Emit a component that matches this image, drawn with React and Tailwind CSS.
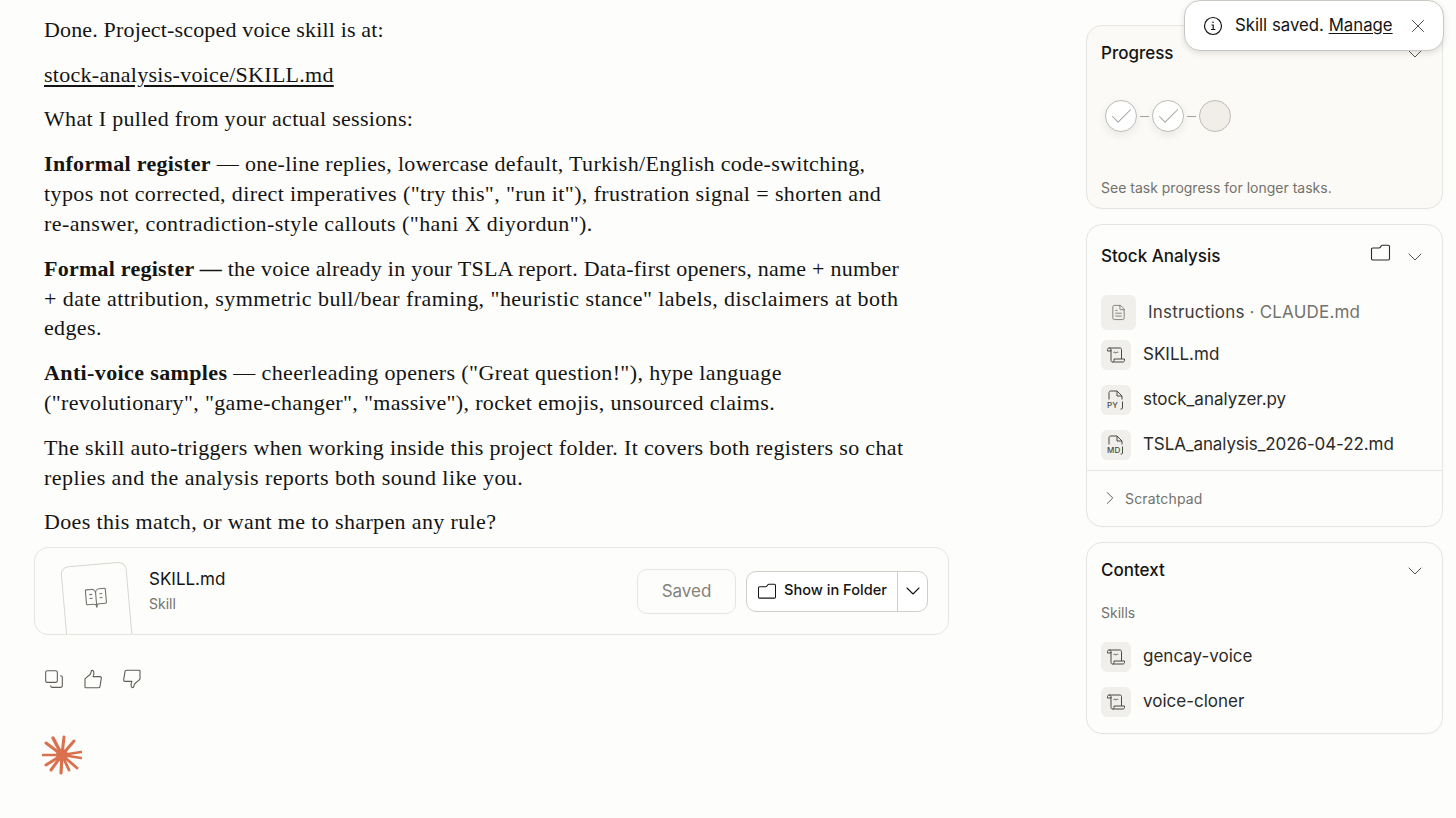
import React from "react";
import { ChevronDown, ChevronRight, X, Check, Copy, FileText, BookOpenText } from "lucide-react";

const SANS = "font-['Inter','Liberation_Sans',sans-serif]";
const SERIF = "font-['Liberation_Serif',serif]";

const FolderIcon = ({ className }) => (
  <svg viewBox="0 0 20 18" fill="none" stroke="currentColor" strokeWidth="1.1" className={className}>
    <path d="M1 5.2c0-.7.5-1.200 1.200-1.200h6.300c.5 0 .9-.2 1.200-.6l1.300-1.700c.2-.3.5-.4.9-.4h5.900c.6 0 1.200.5 1.200 1.200v12.300c0 .7-.6 1.200-1.200 1.200H2.200c-.7 0-1.200-.5-1.200-1.200V5.200Z" />
  </svg>
);

const ScrollIcon = () => (
  <svg viewBox="0 0 20 20" fill="none" stroke="currentColor" strokeWidth="1" className="w-[20px] h-[20px] text-[#4a4943]">
    <path d="M3 3h11c1 0 1.500.7 1.500 1.500V14" />
    <path d="M3 3c-1 0-1.500.8-1.500 1.500V6H5V4.500C5 3.700 4.300 3 3 3Z" />
    <path d="M5 5v10.500c0 1 .7 1.500 1.500 1.500H17c1 0 1.500-.8 1.500-1.500V14H8v1.500C8 16.300 7.500 17 6.500 17" />
    <path d="M7.500 7.500c.6-.7 1-.7 1.500 0s1 .7 1.500 0 1-.7 1.500 0" />
  </svg>
);

const ThumbIcon = ({ className }) => (
  <svg viewBox="0 0 20 20" fill="none" stroke="currentColor" strokeWidth="1.1" strokeLinejoin="round" className={className}>
    <path d="M2 18V10.500c0-.5.3-1 .7-1.300L7 5.500c.6-.6 1-1.800 1.200-3.200.2-1.200 2-1.300 2.500.2.5 1.600.2 3.500-.6 5.100H17c1 0 1.500.8 1.300 1.800l-1.300 8c-.1.800-.6 1.400-1.500 1.400H3c-.6 0-1-.2-1-.8Z" />
  </svg>
);

const FileBadgeIcon = ({ label }) => (
  <div className="relative w-[20px] h-[22px] text-[#4a4943]">
    <svg viewBox="0 0 20 22" fill="none" stroke="currentColor" strokeWidth="1" className="w-[20px] h-[22px]">
      <path d="M3 10.500V3.500C3 2.700 3.700 2 4.500 2H11l5 5v3.500" />
      <path d="M11 2v5h5" />
      <path d="M16.500 12.500V19c0 .5-.4 1-1 1h-1" />
    </svg>
    <span className={`absolute left-[1px] top-[11px] text-[8px] leading-[10px] font-medium tracking-[0.2px] ${SANS}`}>{label}</span>
  </div>
);

const IconBox = ({ children, large }) => (
  <div className={`flex items-center justify-center rounded-[6px] bg-[#f0efec] shrink-0 ${large ? "w-[35px] h-[35px]" : "w-[30px] h-[30px]"}`}>
    {children}
  </div>
);

const PanelHeader = ({ title, children }) => (
  <div className="flex items-center justify-between h-[28px]">
    <span className="text-[17px] font-medium text-[#141413]">{title}</span>
    <div className="flex items-center gap-[12px]">
      {children}
      <ChevronDown className="w-[24px] h-[24px] text-[#55544f]" strokeWidth={1} />
    </div>
  </div>
);

const FileRow = ({ icon, name, wide }) => (
  <div className="flex items-center gap-[12px] h-[30px]">
    <IconBox>{icon}</IconBox>
    <span className={`text-[17px] text-[#2b2a27] ${wide ? "tracking-[-0.1px]" : ""}`}>{name}</span>
  </div>
);

const StepDone = () => (
  <div className="flex items-center justify-center w-[32px] h-[32px] rounded-full bg-white border border-[#bdbcb6] shadow-[0_3px_10px_rgba(0,0,0,0.08)]">
    <Check className="w-[27px] h-[27px] text-[#a3a29c]" strokeWidth={0.9} />
  </div>
);

const StepLine = () => <div className="w-[9px] h-px mx-[3px] bg-[#a3a29c]" />;

const ClaudeMark = () => (
  <svg viewBox="0 0 40 40" className="w-[40px] h-[40px]" stroke="#d9704e" strokeLinecap="round" fill="none">
    <path strokeWidth="3.400" d="M20 20 L11 3" />
    <path strokeWidth="3" d="M20 20 L22 2" />
    <path strokeWidth="3" d="M20 20 L32 6" />
    <path strokeWidth="2.600" d="M20 20 L39 17" />
    <path strokeWidth="2.600" d="M20 20 L39 23" />
    <path strokeWidth="2.800" d="M20 20 L35 33" />
    <path strokeWidth="2.800" d="M20 20 L27 35" />
    <path strokeWidth="3.200" d="M20 20 L19 38" />
    <path strokeWidth="3" d="M20 20 L9 35" />
    <path strokeWidth="3" d="M20 20 L4 30" />
    <path strokeWidth="2.600" d="M20 20 L1 20" />
    <path strokeWidth="3" d="M20 20 L4 8" />
    <circle cx="20" cy="20" r="6" fill="#d9704e" stroke="none" />
  </svg>
);

const Para = ({ children }) => <p className="mb-[14.8px]">{children}</p>;

export default function App() {
  return (
    <div className={`relative flex min-h-[818px] overflow-hidden bg-[#fdfdfb] text-[#141413] ${SANS}`}>
      <main className="w-[1086px] shrink-0 pl-[44px] pt-[15px]">
        <div className={`w-[880px] text-[22px] leading-[29.9px] tracking-[0.36px] ${SERIF}`}>
          <Para><span className="tracking-[0.16px]">Done. Project-scoped voice skill is at:</span></Para>
          <Para><span className="underline underline-offset-[3px] tracking-[0.28px]">stock-analysis-voice/SKILL.md</span></Para>
          <Para><span className="tracking-[0.31px]">What I pulled from your actual sessions:</span></Para>
          <Para>
            <span className="tracking-[0.32px]"><strong>Informal register</strong> — one-line replies, lowercase default, Turkish/English code-switching,</span><br />
            <span className="tracking-[0.39px]">typos not corrected, direct imperatives ("try this", "run it"), frustration signal = shorten and</span><br />
            <span className="tracking-[0.42px]">re-answer, contradiction-style callouts ("hani X diyordun").</span>
          </Para>
          <Para>
            <span className="tracking-[0.24px]"><strong>Formal register —</strong> the voice already in your TSLA report. Data-first openers, name + number</span><br />
            <span className="tracking-[0.43px]">+ date attribution, symmetric bull/bear framing, "heuristic stance" labels, disclaimers at both</span><br />
            edges.
          </Para>
          <Para>
            <span className="tracking-[0.38px]"><strong>Anti-voice samples</strong> — cheerleading openers ("Great question!"), hype language</span><br />
            <span className="tracking-[0.34px]">("revolutionary", "game-changer", "massive"), rocket emojis, unsourced claims.</span>
          </Para>
          <Para>
            <span className="tracking-[0.35px]">The skill auto-triggers when working inside this project folder. It covers both registers so chat</span><br />
            <span className="tracking-[0.43px]">replies and the analysis reports both sound like you.</span>
          </Para>
          <p>Does this match, or want me to sharpen any rule?</p>
        </div>

        {/* Artifact card */}
        <div className="mt-[10px] -ml-[10px] w-[915px] h-[88px] flex items-center rounded-[14px] border border-[#e6e5e0] overflow-hidden pr-[20px]">
          <div className="relative w-[114px] h-full shrink-0">
            <div className="absolute left-[29px] top-[16px] w-[66px] h-[90px] rounded-[8px] border border-[#d8d7d1] bg-[#fdfdfb] -rotate-[5deg] flex justify-center pt-[21px]">
              <BookOpenText className="w-[24px] h-[24px] text-[#73726c]" strokeWidth={1.1} />
            </div>
          </div>
          <div className="flex flex-col">
            <span className="text-[17px] leading-[24px] text-[#141413]">SKILL.md</span>
            <span className="text-[14px] leading-[24px] mt-[1px] text-[#73726c]">Skill</span>
          </div>
          <div className="ml-auto flex items-center gap-[10px]">
            <div className="flex items-center justify-center w-[99px] h-[45px] rounded-[10px] border border-[#e6e5e0] text-[17px] text-[#83827c]">Saved</div>
            <div className="flex items-center h-[41px] w-[182px] rounded-[10px] border border-[#cfcec8] bg-white">
              <div className="flex items-center gap-[7px] pl-[10px] w-[150px] h-full text-[14.600px] font-medium text-[#141413]">
                <FolderIcon className="w-[20px] h-[17px]" />
                Show in Folder
              </div>
              <div className="flex items-center justify-center flex-1 h-full border-l border-[#cfcec8]">
                <ChevronDown className="w-[24px] h-[24px] text-[#141413]" strokeWidth={1.1} />
              </div>
            </div>
          </div>
        </div>

        <div className="flex items-center gap-[19px] mt-[34px] text-[#5f5e58]">
          <Copy className="w-[20px] h-[20px] -scale-x-100 -scale-y-100" strokeWidth={1.3} />
          <ThumbIcon className="w-[20px] h-[20px]" />
          <ThumbIcon className="w-[20px] h-[20px] rotate-180" />
        </div>

        <div className="mt-[46px] -ml-[2px]">
          <ClaudeMark />
        </div>
      </main>

      <aside className="w-[357px] shrink-0 pt-[25px] flex flex-col gap-[15px]">
        <section className="h-[184px] rounded-[16px] border border-[#e6e5e0] bg-[#fbfaf7] pl-[14px] pr-[15px] pt-[14px] shadow-[0_1px_2px_rgba(0,0,0,0.02)]">
          <PanelHeader title="Progress" />
          <div className="flex items-center mt-[32px] ml-[4px]">
            <StepDone />
            <StepLine />
            <StepDone />
            <StepLine />
            <div className="w-[32px] h-[32px] rounded-full bg-[#f0eee7] border border-[#bdbcb6]" />
          </div>
          <p className="mt-[46px] text-[14px] leading-[20px] text-[#73726c]">See task progress for longer tasks.</p>
        </section>

        <section className="h-[303px] rounded-[16px] border border-[#e6e5e0] shadow-[0_1px_2px_rgba(0,0,0,0.02)]">
          <div className="pl-[14px] pr-[15px] pt-[18px]">
            <PanelHeader title="Stock Analysis">
              <FolderIcon className="w-[21px] h-[18px] -mt-[9px] text-[#2b2a27]" />
            </PanelHeader>
            <div className="flex items-center gap-[12px] mt-[24px] h-[35px]">
              <IconBox large>
                <FileText className="w-[17px] h-[17px] text-[#73726c]" strokeWidth={1.2} />
              </IconBox>
              <span className="text-[17px] tracking-[0.2px] text-[#3d3d3a]">Instructions<span className="text-[#73726c]"> · CLAUDE.md</span></span>
            </div>
            <div className="flex flex-col gap-[15px] mt-[10px]">
              <FileRow icon={<ScrollIcon />} name="SKILL.md" />
              <FileRow icon={<FileBadgeIcon label="PY" />} name="stock_analyzer.py" />
              <FileRow icon={<FileBadgeIcon label="MD" />} name="TSLA_analysis_2026-04-22.md" wide />
            </div>
          </div>
          <div className="mt-[10px] border-t border-[#e6e5e0] flex items-center gap-[4px] h-[55px] pl-[12px]">
            <ChevronRight className="w-[22px] h-[22px] text-[#55544f]" strokeWidth={1} />
            <span className="text-[14px] tracking-[0.15px] text-[#73726c]">Scratchpad</span>
          </div>
        </section>

        <section className="h-[192px] rounded-[16px] border border-[#e6e5e0] pl-[14px] pr-[15px] pt-[14px] shadow-[0_1px_2px_rgba(0,0,0,0.02)]">
          <PanelHeader title="Context" />
          <p className="mt-[18px] text-[14px] leading-[20px] text-[#73726c]">Skills</p>
          <div className="flex flex-col gap-[15px] mt-[19px]">
            <FileRow icon={<ScrollIcon />} name="gencay-voice" />
            <FileRow icon={<ScrollIcon />} name="voice-cloner" />
          </div>
        </section>
      </aside>

      {/* Toast */}
      <div className="absolute left-[1184px] top-0 w-[260px] h-[51px] flex items-center rounded-[16px] border border-[#c9c8c2] bg-white pl-[18px] pr-[14px] shadow-[0_2px_6px_rgba(0,0,0,0.12)]">
        <svg viewBox="0 0 20 20" fill="none" stroke="#141413" strokeWidth="1.2" className="w-[20px] h-[20px] shrink-0">
          <circle cx="10" cy="10" r="8.500" />
          <path d="M8.500 9h1.700v4.500M8 13.500h4.300" />
          <circle cx="10" cy="6.300" r=".8" fill="#141413" stroke="none" />
        </svg>
        <span className="ml-[12px] text-[16.800px] text-[#141413]">Skill saved. <span className="underline underline-offset-2">Manage</span></span>
        <X className="ml-auto w-[22px] h-[22px] text-[#3d3d3a]" strokeWidth={1} />
      </div>
    </div>
  );
}
